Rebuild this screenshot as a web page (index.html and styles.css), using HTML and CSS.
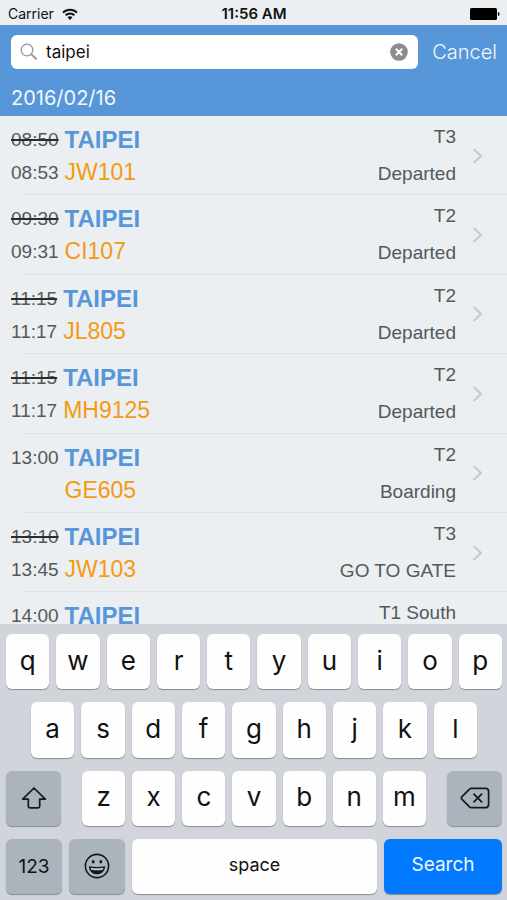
FILE: index.html
```html
<!DOCTYPE html>
<html lang="en">
<head>
<meta charset="utf-8">
<meta name="viewport" content="width=device-width, initial-scale=1">
<title>Flight search</title>
<link rel="stylesheet" href="styles.css">
</head>
<body>
<div class="status">
  <div class="carrier">
    <span>Carrier</span>
    <svg width="16" height="12" viewBox="0 0 16 12" aria-hidden="true">
      <g fill="none" stroke="#111" stroke-width="2">
        <path d="M1 4.6C4.8.7 11.2.7 15 4.6"/>
        <path d="M3.6 7.3c2.4-2.4 6.4-2.4 8.8 0"/>
      </g>
      <path d="M8 12 5.5 9.3c1.4-1.3 3.6-1.3 5 0z" fill="#111"/>
    </svg>
  </div>
  <div class="clock">11:56 AM</div>
  <svg class="battery" width="30" height="12" viewBox="0 0 30 12" aria-hidden="true">
    <rect width="27" height="12" rx="1.5"/>
    <path d="M28 4c2 .6 2 3.4 0 4z"/>
  </svg>
</div>

<header class="header">
  <form class="search">
    <div class="field">
      <svg width="18" height="18" viewBox="0 0 18 18" fill="none" stroke="#98989c" aria-hidden="true">
        <circle cx="7" cy="7" r="5.8" stroke-width="1.3"/>
        <path d="M11.3 11.3 16.6 16.4" stroke-width="2"/>
      </svg>
      <input type="text" value="taipei" aria-label="Search flights">
      <button class="clear" type="button" aria-label="Clear">
        <svg width="18" height="18" viewBox="0 0 18 18" aria-hidden="true">
          <circle cx="9" cy="9" r="8.8" fill="#8c8c8f"/>
          <path d="M5.8 5.8l6.4 6.4M12.2 5.8l-6.4 6.4" stroke="#fff" stroke-width="2"/>
        </svg>
      </button>
    </div>
    <button class="cancel" type="button">Cancel</button>
  </form>
  <h2 class="date">2016/02/16</h2>
</header>

<main class="flights">
  <a class="flight" href="#">
    <span class="info"><s>08:50</s><b>TAIPEI</b><span>08:53</span><em>JW101</em></span>
    <span class="state"><span>T3</span><span>Departed</span></span>
    <svg class="chevron" width="11" height="16" viewBox="0 0 11 16"><path d="M1.5 1l7.5 7-7.5 7"/></svg>
  </a>
  <a class="flight" href="#">
    <span class="info"><s>09:30</s><b>TAIPEI</b><span>09:31</span><em>CI107</em></span>
    <span class="state"><span>T2</span><span>Departed</span></span>
    <svg class="chevron" width="11" height="16" viewBox="0 0 11 16"><path d="M1.5 1l7.5 7-7.5 7"/></svg>
  </a>
  <a class="flight" href="#">
    <span class="info"><s>11:15</s><b>TAIPEI</b><span>11:17</span><em>JL805</em></span>
    <span class="state"><span>T2</span><span>Departed</span></span>
    <svg class="chevron" width="11" height="16" viewBox="0 0 11 16"><path d="M1.5 1l7.5 7-7.5 7"/></svg>
  </a>
  <a class="flight" href="#">
    <span class="info"><s>11:15</s><b>TAIPEI</b><span>11:17</span><em>MH9125</em></span>
    <span class="state"><span>T2</span><span>Departed</span></span>
    <svg class="chevron" width="11" height="16" viewBox="0 0 11 16"><path d="M1.5 1l7.5 7-7.5 7"/></svg>
  </a>
  <a class="flight" href="#">
    <span class="info"><span>13:00</span><b>TAIPEI</b><span></span><em>GE605</em></span>
    <span class="state"><span>T2</span><span>Boarding</span></span>
    <svg class="chevron" width="11" height="16" viewBox="0 0 11 16"><path d="M1.5 1l7.5 7-7.5 7"/></svg>
  </a>
  <a class="flight" href="#">
    <span class="info"><s>13:10</s><b>TAIPEI</b><span>13:45</span><em>JW103</em></span>
    <span class="state"><span>T3</span><span>GO TO GATE</span></span>
    <svg class="chevron" width="11" height="16" viewBox="0 0 11 16"><path d="M1.5 1l7.5 7-7.5 7"/></svg>
  </a>
  <a class="flight" href="#">
    <span class="info"><span>14:00</span><b>TAIPEI</b></span>
    <span class="state"><span>T1 South</span></span>
  </a>
</main>

<div class="keyboard">
  <div class="keys">
    <button>q</button><button>w</button><button>e</button><button>r</button><button>t</button><button>y</button><button>u</button><button>i</button><button>o</button><button>p</button>
  </div>
  <div class="keys home">
    <button>a</button><button>s</button><button>d</button><button>f</button><button>g</button><button>h</button><button>j</button><button>k</button><button>l</button>
  </div>
  <div class="keys lower">
    <button class="dark side" aria-label="Shift">
      <svg width="26" height="24" viewBox="0 0 26 24" fill="none" stroke="#15191f" stroke-width="1.7" stroke-linejoin="round"><path d="M13 2 24.3 13.2H18.7V20.2Q18.7 21.8 17.1 21.8H8.9Q7.3 21.8 7.3 20.2V13.2H1.7Z"/></svg>
    </button>
    <div class="keys middle">
      <button>z</button><button>x</button><button>c</button><button>v</button><button>b</button><button>n</button><button>m</button>
    </div>
    <button class="dark side" aria-label="Delete">
      <svg width="30" height="22" viewBox="0 0 30 22" fill="none" stroke="#15191f" stroke-width="1.7" stroke-linejoin="round"><path d="M11.4 1.3H25.3Q28.6 1.3 28.6 4.6V17.4Q28.6 20.7 25.3 20.7H11.4Q10.2 20.7 9.3 19.7L2 12.3Q.8 11 2 9.7L9.3 2.3Q10.2 1.3 11.4 1.3Z"/><path d="M13.5 6.6l8.6 8.8M22.1 6.6l-8.6 8.8"/></svg>
    </button>
  </div>
  <div class="keys">
    <button class="dark small">123</button>
    <button class="dark small" aria-label="Emoji">
      <svg width="26" height="26" viewBox="0 0 26 26"><circle cx="13" cy="13" r="11.6" fill="none" stroke="#15191f" stroke-width="1.6"/><ellipse cx="9.2" cy="8.8" rx="1.4" ry="1.7" fill="#15191f"/><ellipse cx="16.8" cy="8.8" rx="1.4" ry="1.7" fill="#15191f"/><path d="M4.800 13.200Q13 14.800 21.200 13.200C20.600 18.600 17.200 21.300 13 21.300S5.400 18.600 4.800 13.200Z" fill="#15191f"/><path d="M6.500 14.700Q13 15.800 19.500 14.700L18.700 16.700Q13 17.800 7.300 16.700Z" fill="#c4cad1"/></svg>
    </button>
    <button class="space">space</button>
    <button class="go">Search</button>
  </div>
</div>
</body>
</html>
```
FILE: styles.css
```css
* { box-sizing: border-box; }

body {
  margin: 0;
  height: 100vh;
  display: flex;
  flex-direction: column;
  background: #ebeff1;
  font-family: Inter, "Liberation Sans", sans-serif;
  color: #111;
}

button, input {
  font: inherit;
  color: inherit;
  border: 0;
  padding: 0;
  margin: 0;
  background: none;
}

.status {
  display: grid;
  grid-template-columns: 1fr auto 1fr;
  align-items: center;
  height: 25px;
  padding: 2px 7px 0 8px;
  font-size: 14px;
}

.carrier {
  display: flex;
  align-items: center;
  gap: 8px;
}

.clock { font-size: 15px; font-weight: 600; }

.battery { justify-self: end; }

.header {
  background: #5896da;
  color: #f2f7fd;
  height: 91px;
  padding: 10px 10px 0 11px;
}

.search {
  display: flex;
  align-items: center;
  gap: 14px;
}

.field {
  flex: 1;
  min-width: 0;
  display: flex;
  align-items: center;
  gap: 8px;
  height: 34px;
  padding: 0 10px 0 9px;
  border-radius: 6px;
  background: #fff;
  color: #111;
}

.field input {
  flex: 1;
  min-width: 0;
  font-size: 17px;
  outline: 0;
}

.clear { display: flex; }

.cancel { font-size: 20px; font-weight: 300; }

.date {
  margin: 17px 0 0;
  font-size: 20px;
  line-height: 24px;
  font-weight: 400;
}

/* The list shows 6.4 rows at a time above the keyboard. */
.flights {
  flex: 1;
  min-height: 0;
  overflow: hidden;
  font-family: "Liberation Sans", Arial, sans-serif;
  font-size: 19px;
  color: #55585a;
}

.flight {
  display: flex;
  justify-content: space-between;
  height: calc(100% / 6.4);
  padding: 0 24px 0 11px;
  color: inherit;
  text-decoration: none;
  background: linear-gradient(#dfe3e5, #dfe3e5) 25px 100% / 100% 1px no-repeat;
}

.info {
  display: grid;
  grid-template-columns: auto auto;
  grid-auto-rows: 33px;
  column-gap: 6px;
  line-height: 33px;
  padding-top: 7px;
}

.info s { text-decoration: line-through 2px #2c2c2c; }

.info b { font-size: 24px; color: #5896da; }

.info em {
  font-size: 23px;
  font-style: normal;
  color: #f39a13;
}

.state {
  display: flex;
  flex-direction: column;
  margin-left: auto;
  padding-top: 2px;
  line-height: 37px;
  text-align: right;
}

.flight:last-child .state { margin-right: 27px; }

.chevron {
  align-self: center;
  margin-left: 16px;
  fill: none;
  stroke: #c5c9cc;
  stroke-width: 2;
}

.keyboard {
  display: grid;
  grid-template-rows: repeat(4, 1fr);
  gap: 13px;
  height: 276px;
  padding: 10px 5px 6px 6px;
  background: #d1d5db;
}

.keys { display: flex; gap: 7px; }

.keys button {
  flex: 1;
  min-width: 0;
  display: flex;
  align-items: center;
  justify-content: center;
  padding-bottom: 3px;
  border-radius: 6px;
  background: #fefefe;
  box-shadow: 0 1px 1px #878b92;
  font-size: 26px;
  font-weight: 400;
}

.home { padding: 0 25px; }

.lower { gap: 21px; }

.middle { flex: 1; }

.keys .dark { background: #abb3bd; padding: 0; }

.keys .side { flex: 0 0 55px; }

.keys .small { flex: 0 0 56px; font-size: 19px; }

.keys .space { font-size: 18px; }

.keys .go {
  flex: 0 0 118px;
  background: #017aff;
  color: #f2f7fd;
  font-size: 19px;
}
```
